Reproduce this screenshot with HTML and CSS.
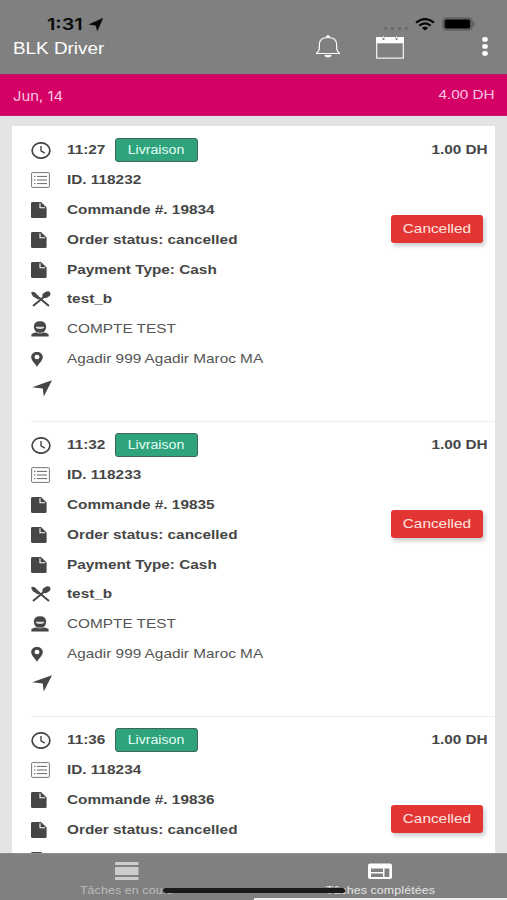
FILE: index.html
```html
<!DOCTYPE html>
<html lang="fr">
<head>
<meta charset="utf-8">
<title>BLK Driver</title>
<link rel="stylesheet" href="styles.css">
</head>
<body>
<svg class="defs" aria-hidden="true">
  <symbol id="clock" viewBox="0 0 20 16" preserveAspectRatio="none"><ellipse cx="10" cy="8" rx="8.9" ry="7.2" fill="none" stroke="currentColor" stroke-width="1.7"/><path d="M10 3.7V8.3L13.8 10.5" fill="none" stroke="currentColor" stroke-width="1.4"/></symbol>
  <symbol id="list" viewBox="0 0 19 16"><rect x=".6" y=".6" width="17.8" height="14.8" rx=".8" fill="none" stroke="currentColor" stroke-width=".9"/><path d="M3 4.4h1.5M3 8h1.5M3 11.6h1.5M6 4.4h10M6 8h10M6 11.6h10" stroke="currentColor" stroke-width="1"/></symbol>
  <symbol id="file" viewBox="0 0 16 16"><path d="M1.5 0H10L15.6 5.4V14.8Q15.6 16 14.2 16H1.5Q0 16 0 14.8V1.2Q0 0 1.5 0Z" fill="currentColor"/><path d="M9 1.2V5.8H14" fill="none" stroke="#fff" stroke-width="1.1"/></symbol>
  <symbol id="food" viewBox="0 0 20 16"><path d="M2 15L14 5M18 15L8 6.8" stroke="currentColor" stroke-width="2"/><path d="M.3 1.2Q2 0 4 1.6L9 6.6 7 8.6 2 5.3Q0 3.4.3 1.2Z" fill="currentColor"/><ellipse cx="15.4" cy="3.8" rx="4.3" ry="2.9" transform="rotate(-28 15.4 3.8)" fill="currentColor"/></symbol>
  <symbol id="person" viewBox="0 0 18 16"><path d="M2.8 6Q2.8.3 9 .3T15.2 6Q15 9.4 12.6 10.9L17.6 13V15.4H.4V13L5.4 10.9Q3 9.4 2.8 6Z" fill="currentColor"/><path d="M4.6 5.8H13.4Q13 8 9 8T4.6 5.8Z" fill="#ddd"/><path d="M4.6 11.2Q9 13.2 13.4 11.2" fill="none" stroke="#fff" stroke-width=".6"/></symbol>
  <symbol id="pin" viewBox="0 0 12 15"><path fill-rule="evenodd" d="M6 0C2.6 0 .2 2.1.2 5 .2 8.4 4 11.5 6 14.7 8 11.5 11.8 8.4 11.8 5 11.8 2.1 9.4 0 6 0ZM6 2.8A2.5 2.2 0 1 1 6 7.2 2.5 2.2 0 1 1 6 2.8Z" fill="currentColor"/></symbol>
  <symbol id="arrow" viewBox="0 0 20 17"><path d="M20 .2L11.8 16.4 10.7 8.5.2 7.2Z" fill="currentColor"/></symbol>
</svg>
<div class="app">
  <header class="header">
    <div class="status">
      <span class="time wide">1:31</span>
      <svg class="status-arrow" viewBox="0 0 14 13"><path d="M13.6.4L8.4 12.4 7 7.2.5 6.4Z" stroke="#080808" stroke-width=".7"/></svg>
      <span class="signal"><i></i><i></i><i></i><i></i></span>
      <svg class="wifi" viewBox="0 0 20 13"><path d="M1 4.6Q10-2.5 19 4.6M4.3 7.6Q10 3 15.7 7.6" fill="none" stroke="#050505" stroke-width="2.2"/><path d="M6.9 10Q10 7.7 13.1 10L10 12.6Z" fill="#050505"/></svg>
      <svg class="battery" viewBox="0 0 34 14"><rect x=".6" y=".8" width="29.8" height="12.4" rx="3.5" fill="#666" stroke="#5c5c5c" stroke-width=".8"/><rect x="2.6" y="2.4" width="25.6" height="9.2" rx="2" fill="#000"/><path d="M31.4 5V9Q32.6 8.4 32.6 7T31.4 5Z" fill="#4f4f4f"/></svg>
    </div>
    <div class="titlebar">
      <h1 class="title wide">BLK Driver</h1>
      <svg class="bell" viewBox="0 0 26 23"><path d="M1.2 18.5Q4.4 16.8 4.4 11.5V9.2Q4.4 2.5 13 2.5T21.6 9.2V11.5Q21.6 16.8 24.8 18.5Z" fill="none" stroke="#fff" stroke-width="1.2"/><path d="M10.8 2.3Q10.8.3 13 .3T15.2 2.3ZM9.3 20H16.7Q15.8 22.6 13 22.6T9.3 20Z" fill="#fff"/></svg>
      <svg class="calendar" viewBox="0 0 28 23"><rect x=".7" y="1.7" width="26.6" height="20.4" fill="none" stroke="#fff" stroke-width="1.1"/><path d="M.2 1.2H27.8V7.3H.2Z" fill="#fff"/><path d="M7.5 0V4M20.5 0V4" stroke="#808080" stroke-width="1.8"/><path d="M7.5 0V2.4M20.5 0V2.4" stroke="#fff" stroke-width=".8"/></svg>
      <svg class="more" viewBox="0 0 6 19"><ellipse cx="3" cy="2.4" rx="2.8" ry="2.3"/><ellipse cx="3" cy="9.4" rx="2.8" ry="2.3"/><ellipse cx="3" cy="16.4" rx="2.8" ry="2.3"/></svg>
    </div>
  </header>
  <div class="datebar"><span class="day wide">Jun, 14</span><span class="sum wide right">4.00 DH</span></div>
  <main class="content">
    <div class="card">
      <article class="task">
        <div class="rows">
          <div class="row"><svg class="i-clock"><use href="#clock"/></svg><b class="wide hour">11:27</b><span class="badge"><span class="wide center">Livraison</span></span><b class="wide right price">1.00 DH</b></div>
          <div class="row"><svg class="i-list"><use href="#list"/></svg><b class="wide">ID. 118232</b></div>
          <div class="row"><svg class="i-file"><use href="#file"/></svg><b class="wide">Commande #. 19834</b></div>
          <div class="row"><svg class="i-file"><use href="#file"/></svg><b class="wide">Order status: cancelled</b></div>
          <div class="row"><svg class="i-file"><use href="#file"/></svg><b class="wide">Payment Type: Cash</b></div>
          <div class="row"><svg class="i-food"><use href="#food"/></svg><b class="wide">test_b</b></div>
          <div class="row"><svg class="i-person"><use href="#person"/></svg><span class="wide">COMPTE TEST</span></div>
          <div class="row"><svg class="i-pin"><use href="#pin"/></svg><span class="wide">Agadir 999 Agadir Maroc MA</span></div>
          <div class="row"><svg class="i-arrow"><use href="#arrow"/></svg></div>
        </div>
        <div class="cancelled"><span class="wide center">Cancelled</span></div>
      </article>
      <article class="task">
        <div class="rows">
          <div class="row"><svg class="i-clock"><use href="#clock"/></svg><b class="wide hour">11:32</b><span class="badge"><span class="wide center">Livraison</span></span><b class="wide right price">1.00 DH</b></div>
          <div class="row"><svg class="i-list"><use href="#list"/></svg><b class="wide">ID. 118233</b></div>
          <div class="row"><svg class="i-file"><use href="#file"/></svg><b class="wide">Commande #. 19835</b></div>
          <div class="row"><svg class="i-file"><use href="#file"/></svg><b class="wide">Order status: cancelled</b></div>
          <div class="row"><svg class="i-file"><use href="#file"/></svg><b class="wide">Payment Type: Cash</b></div>
          <div class="row"><svg class="i-food"><use href="#food"/></svg><b class="wide">test_b</b></div>
          <div class="row"><svg class="i-person"><use href="#person"/></svg><span class="wide">COMPTE TEST</span></div>
          <div class="row"><svg class="i-pin"><use href="#pin"/></svg><span class="wide">Agadir 999 Agadir Maroc MA</span></div>
          <div class="row"><svg class="i-arrow"><use href="#arrow"/></svg></div>
        </div>
        <div class="cancelled"><span class="wide center">Cancelled</span></div>
      </article>
      <article class="task">
        <div class="rows">
          <div class="row"><svg class="i-clock"><use href="#clock"/></svg><b class="wide hour">11:36</b><span class="badge"><span class="wide center">Livraison</span></span><b class="wide right price">1.00 DH</b></div>
          <div class="row"><svg class="i-list"><use href="#list"/></svg><b class="wide">ID. 118234</b></div>
          <div class="row"><svg class="i-file"><use href="#file"/></svg><b class="wide">Commande #. 19836</b></div>
          <div class="row"><svg class="i-file"><use href="#file"/></svg><b class="wide">Order status: cancelled</b></div>
          <div class="row"><svg class="i-file"><use href="#file"/></svg></div>
        </div>
        <div class="cancelled"><span class="wide center">Cancelled</span></div>
      </article>
    </div>
  </main>
  <nav class="tabs">
    <div class="tab">
      <svg class="tab-icon" viewBox="0 0 24 18"><path d="M0 0H23.5V3H0ZM0 5H23.5V13H0ZM0 15H23.5V18H0Z" fill="#ccc"/></svg>
      <span class="wide center">Tâches en cours</span>
    </div>
    <div class="tab active">
      <svg class="tab-icon" viewBox="0 0 24 18"><rect y="1.5" width="24" height="15.5" rx="2" fill="#fff"/><path d="M3 6.5H15V10H3ZM3 11.5H15V15H3ZM16.5 6.5H21.3V15H16.5Z" fill="#808080"/></svg>
      <span class="wide center">Tâches complétées</span>
    </div>
    <div class="home"></div>
    <div class="edge"></div>
  </nav>
</div>
</body>
</html>
```

FILE: styles.css
```css
* { box-sizing: border-box; }
body { margin: 0; font: 13px/16px "Liberation Sans", Arial, sans-serif; color: #464646; }
svg { display: block; flex: none; }
.defs { position: absolute; width: 0; height: 0; }
.app { width: 507px; height: 900px; display: flex; flex-direction: column; overflow: hidden; }

/* Extended-width lettering */
.wide { display: inline-block; white-space: nowrap; transform: scaleX(1.18); transform-origin: left center; }
.wide.right { transform-origin: right center; }
.wide.center { transform-origin: center; }

.header { height: 74px; flex: none; background: #808080; color: #fff; padding-top: 14px; }
.status { height: 20px; display: flex; align-items: center; padding-left: 47px; color: #080808; }
.time { width: 42px; font: 600 16.5px/20px Inter, sans-serif; transform: scaleX(1.2); }
.status-arrow { width: 14px; height: 13px; fill: #080808; }
.signal { display: flex; gap: 3.5px; margin: 9px 0 0 281px; width: 24px; }
.signal i { width: 3.5px; height: 3.5px; border-radius: 50%; background: #666; }
.wifi { width: 20px; height: 13px; margin-left: 7px; }
.battery { width: 34px; height: 14px; margin-left: 7px; }
.titlebar { height: 29px; display: flex; align-items: center; padding-left: 13px; margin-top: -2px; }
.title { width: 302px; margin: 4px 0 0; font-size: 16px; line-height: 20px; font-weight: 400; }
.bell { width: 26px; height: 23px; }
.calendar { width: 28px; height: 23px; margin: 1px 0 0 35px; }
.more { width: 6px; height: 19px; margin-left: 78px; fill: #fff; }

.datebar { height: 42px; flex: none; display: flex; align-items: center; justify-content: space-between; padding: 0 12px 0 13px; background: #d50065; border-top: 1px solid #b61562; border-bottom: 1px solid #c8186a; color: #fbc8e2; }
.day { font-family: Inter, sans-serif; transform: scaleX(1.14); padding-top: 2px; }
.sum { padding-bottom: 1px; }

.content { flex: 1; min-height: 0; overflow: hidden; background: #e3e4e6; padding: 10px 12px 0; }
.card { background: #fff; height: 800px; }
.task { position: relative; height: 295px; padding: 9.3px 7px 0 19px; }
.task::after { content: ""; position: absolute; left: 19px; right: 0; bottom: -1px; height: 1px; background: #eee; }
.row { height: 29.85px; display: grid; grid-template-columns: 36px auto auto 1fr; align-items: center; }
.row span.wide { color: #555; }
.hour { width: 48px; }
.row .badge { width: 83px; height: 24px; display: flex; align-items: center; justify-content: center; background: #2fa37c; border: 1px solid #3d6657; border-radius: 3px; font-size: 12px; }
.row .badge .wide { color: #e4fff5; }
.price { justify-self: end; }
.cancelled { position: absolute; right: 12px; top: 89px; width: 92px; height: 28px; display: flex; align-items: center; justify-content: center; border-radius: 3px; background: #e33634; color: #ffe3df; box-shadow: 2px 3px 4px rgba(0,0,0,.2); }
.i-clock { width: 20px; height: 17px; }
.i-list { width: 19px; height: 16px; color: #666; }
.i-file { width: 16px; height: 16px; }
.i-food { width: 20px; height: 16px; }
.i-person { width: 18px; height: 16px; }
.i-pin { width: 12px; height: 15px; }
.i-arrow { width: 20px; height: 17px; margin-left: 1px; }

.tabs { position: relative; height: 47px; flex: none; display: grid; grid-template-columns: 1fr 1fr; background: #808080; border-top: 1px solid #8e8e8e; color: #bdbdbd; }
.tab { display: flex; flex-direction: column; align-items: center; padding-top: 8px; font-size: 10.5px; line-height: 14px; letter-spacing: .1px; }
.tab.active { color: #e4e4e4; }
.tab-icon { width: 24px; height: 18px; margin-bottom: 3px; }
.home { position: absolute; left: 163px; top: 34px; width: 182px; height: 5px; border-radius: 3px; background: #1a1a1a; }
.edge { position: absolute; left: 254px; right: 0; bottom: 0; height: 2px; background: #eee; }
```
